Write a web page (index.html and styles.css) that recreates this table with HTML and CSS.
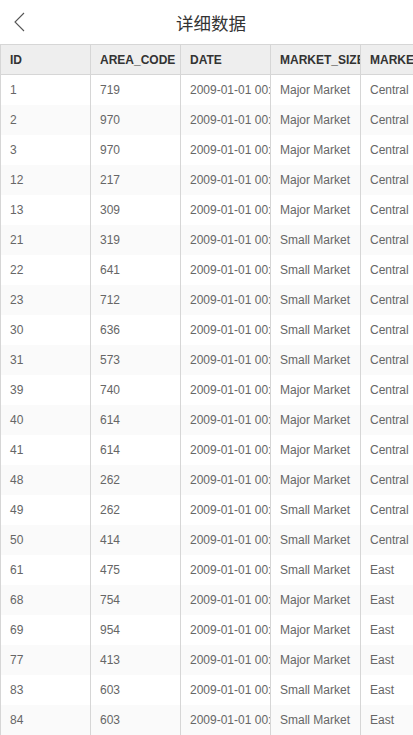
FILE: index.html
```html
<!DOCTYPE html>
<html lang="zh">
<head>
    <meta charset="UTF-8">
    <meta name="viewport" content="width=device-width, initial-scale=1.0">
    <title>详细数据</title>
    <link rel="stylesheet" href="styles.css">
</head>
<body>
    <div class="navbar">
        <span class="back">
            <svg width="14" height="20" viewBox="0 0 14 20"><path d="M11 1 L2 10 L11 19" fill="none" stroke="#555" stroke-width="1.1"/></svg>
        </span>
        <h1>详细数据</h1>
    </div>
    <div class="table-wrap">
        <table>
            <thead>
                <tr><th>ID</th><th>AREA_CODE</th><th>DATE</th><th>MARKET_SIZE</th><th>MARKET</th></tr>
            </thead>
            <tbody>
                <tr><td>1</td><td>719</td><td>2009-01-01 00:00:00</td><td>Major Market</td><td>Central</td></tr>
                <tr><td>2</td><td>970</td><td>2009-01-01 00:00:00</td><td>Major Market</td><td>Central</td></tr>
                <tr><td>3</td><td>970</td><td>2009-01-01 00:00:00</td><td>Major Market</td><td>Central</td></tr>
                <tr><td>12</td><td>217</td><td>2009-01-01 00:00:00</td><td>Major Market</td><td>Central</td></tr>
                <tr><td>13</td><td>309</td><td>2009-01-01 00:00:00</td><td>Major Market</td><td>Central</td></tr>
                <tr><td>21</td><td>319</td><td>2009-01-01 00:00:00</td><td>Small Market</td><td>Central</td></tr>
                <tr><td>22</td><td>641</td><td>2009-01-01 00:00:00</td><td>Small Market</td><td>Central</td></tr>
                <tr><td>23</td><td>712</td><td>2009-01-01 00:00:00</td><td>Small Market</td><td>Central</td></tr>
                <tr><td>30</td><td>636</td><td>2009-01-01 00:00:00</td><td>Small Market</td><td>Central</td></tr>
                <tr><td>31</td><td>573</td><td>2009-01-01 00:00:00</td><td>Small Market</td><td>Central</td></tr>
                <tr><td>39</td><td>740</td><td>2009-01-01 00:00:00</td><td>Major Market</td><td>Central</td></tr>
                <tr><td>40</td><td>614</td><td>2009-01-01 00:00:00</td><td>Major Market</td><td>Central</td></tr>
                <tr><td>41</td><td>614</td><td>2009-01-01 00:00:00</td><td>Major Market</td><td>Central</td></tr>
                <tr><td>48</td><td>262</td><td>2009-01-01 00:00:00</td><td>Major Market</td><td>Central</td></tr>
                <tr><td>49</td><td>262</td><td>2009-01-01 00:00:00</td><td>Small Market</td><td>Central</td></tr>
                <tr><td>50</td><td>414</td><td>2009-01-01 00:00:00</td><td>Small Market</td><td>Central</td></tr>
                <tr><td>61</td><td>475</td><td>2009-01-01 00:00:00</td><td>Small Market</td><td>East</td></tr>
                <tr><td>68</td><td>754</td><td>2009-01-01 00:00:00</td><td>Major Market</td><td>East</td></tr>
                <tr><td>69</td><td>954</td><td>2009-01-01 00:00:00</td><td>Major Market</td><td>East</td></tr>
                <tr><td>77</td><td>413</td><td>2009-01-01 00:00:00</td><td>Major Market</td><td>East</td></tr>
                <tr><td>83</td><td>603</td><td>2009-01-01 00:00:00</td><td>Small Market</td><td>East</td></tr>
                <tr><td>84</td><td>603</td><td>2009-01-01 00:00:00</td><td>Small Market</td><td>East</td></tr>
            </tbody>
        </table>
    </div>
</body>
</html>
```

FILE: styles.css
```css
/* General Styles */
body {
    font-family: "Liberation Sans", "Noto Sans CJK SC", sans-serif;
    margin: 0;
    padding: 0;
    background-color: #fff;
    height: 735px;
    overflow: hidden;
}

/* Navigation Bar */
.navbar {
    position: relative;
    height: 44px;
    display: flex;
    align-items: center;
    justify-content: center;
}

.back {
    position: absolute;
    left: 13px;
    top: 12px;
    line-height: 0;
}

.navbar h1 {
    margin: 0 0 0 9px;
    font-size: 17.5px;
    font-weight: normal;
    color: #333;
}

/* Table */
.table-wrap {
    overflow: hidden;
    width: 100%;
}

table {
    border-collapse: collapse;
    table-layout: fixed;
    width: 450px;
    font-size: 12px;
}

th,
td {
    width: 90px;
    height: 30px;
    padding: 0 9px;
    box-sizing: border-box;
    text-align: left;
    white-space: nowrap;
    overflow: hidden;
    border-left: 1px solid #d6d6d6;
    border-right: 1px solid #d6d6d6;
}

th {
    background-color: #eee;
    color: #333;
    font-weight: bold;
    border-top: 1px solid #d6d6d6;
    border-bottom: 1px solid #d6d6d6;
}

td {
    color: #666;
}

tbody tr:nth-child(even) {
    background-color: #fafafa;
}
```
